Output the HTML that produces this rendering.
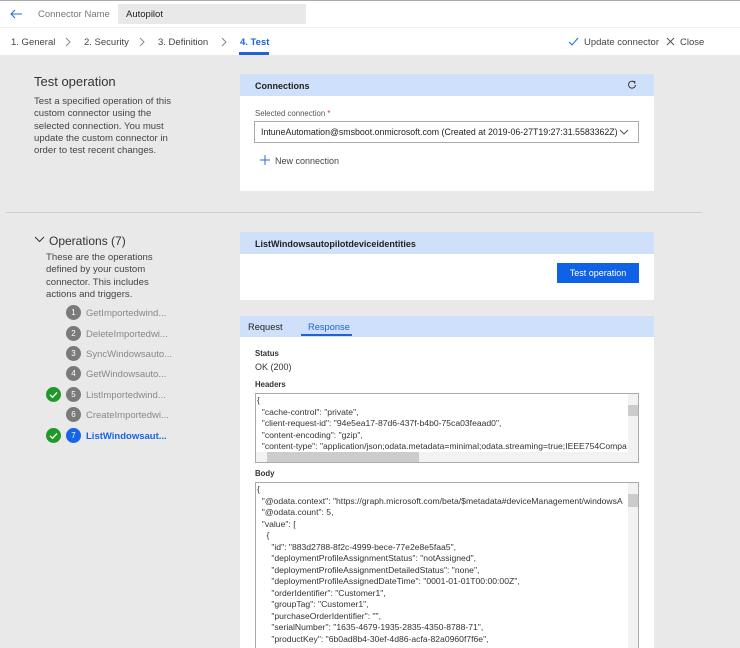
<!DOCTYPE html>
<html><head><meta charset="utf-8"><style>
*{box-sizing:border-box;margin:0;padding:0}
html,body{width:740px;height:648px;overflow:hidden}
body{background:#e9e9e9;font-family:"Liberation Sans",sans-serif;font-size:9px;color:#333;position:relative}
.abs{position:absolute}
.top{left:0;top:0;width:740px;height:55px;background:#fff;border-top:1px solid #aaa}
.hdr{background:#cfe0fa;color:#222;font-weight:bold;font-size:9px}
.white{background:#fff}
.mono{font-family:"Liberation Sans",sans-serif;font-size:8.6px;line-height:11.5px;white-space:pre;color:#333}
.circ{width:15px;height:15px;border-radius:50%;background:#7a7a7a;color:#fff;font-size:8px;text-align:center;line-height:15px;position:absolute}
.chk{width:15px;height:15px;border-radius:50%;background:#1f9a2a;position:absolute}
.op{position:absolute;left:86px;color:#888;font-size:9.5px}
.chev{position:absolute;top:36px}
</style></head><body>
<div class="abs top">
 <svg class="abs" style="left:9px;top:8px" width="14" height="10"><path d="M13 5H2M6 1L2 5l4 4" stroke="#2a6fd6" stroke-width="1.1" fill="none"/></svg>
 <div class="abs" style="left:38px;top:8px;color:#777;font-size:9.5px">Connector Name</div>
 <div class="abs" style="left:118px;top:3px;width:188px;height:20px;background:#e9e9e9;padding:5px 8px;font-size:9.5px;color:#222">Autopilot</div>
 <div class="abs" style="left:0;top:26px;width:740px;height:1px;background:#f0f0f0"></div>
 <div class="abs" style="left:11px;top:36px;font-size:9.5px;color:#444">1. General</div>
 <svg class="chev" style="left:65px" width="6" height="10"><path d="M1 1l4 4-4 4" stroke="#888" fill="none"/></svg>
 <div class="abs" style="left:84px;top:36px;font-size:9.5px;color:#444">2. Security</div>
 <svg class="chev" style="left:139px" width="6" height="10"><path d="M1 1l4 4-4 4" stroke="#888" fill="none"/></svg>
 <div class="abs" style="left:158px;top:36px;font-size:9.5px;color:#444">3. Definition</div>
 <svg class="chev" style="left:221px" width="6" height="10"><path d="M1 1l4 4-4 4" stroke="#888" fill="none"/></svg>
 <div class="abs" style="left:240px;top:36px;font-size:9.5px;color:#1f63d6;font-weight:bold">4. Test</div>
 <div class="abs" style="left:239px;top:51px;width:30px;height:3px;background:#1f63d6"></div>
 <svg class="abs" style="left:568px;top:36px" width="11" height="9"><path d="M1 5l3 3 6-7" stroke="#2a6fd6" stroke-width="1.1" fill="none"/></svg>
 <div class="abs" style="left:584px;top:36px;font-size:9.5px;color:#444">Update connector</div>
 <svg class="abs" style="left:666px;top:36px" width="9" height="9"><path d="M1 1l7 7M8 1L1 8" stroke="#555" stroke-width="1" fill="none"/></svg>
 <div class="abs" style="left:680px;top:36px;font-size:9.5px;color:#444">Close</div>
</div>
<div class="abs" style="left:34px;top:74px;font-size:13px;color:#333">Test operation</div>
<div class="abs" style="left:34px;top:96px;font-size:9.6px;line-height:12.3px;color:#444;width:148px">Test a specified operation of this custom connector using the selected connection. You must update the custom connector in order to test recent changes.</div>

<div class="abs hdr" style="left:240px;top:74px;width:414px;height:22px;padding:7px 15px">Connections<svg style="position:absolute;right:17px;top:6px" width="10" height="10"><path d="M7.5 2.2A3.5 3.5 0 1 0 8.5 5" stroke="#333" fill="none"/><path d="M5.5 1.5h2.3v2.3" stroke="#333" fill="none"/></svg></div>
<div class="abs white" style="left:240px;top:96px;width:414px;height:95px">
 <div class="abs" style="left:15px;top:13px;font-size:7.8px;color:#555">Selected connection <span style="color:#c33">*</span></div>
 <div class="abs" style="left:14px;top:25px;width:385px;height:22px;border:1px solid #aaa;padding:5px 6px;font-size:8.8px;color:#222;white-space:nowrap">IntuneAutomation@smsboot.onmicrosoft.com (Created at 2019-06-27T19:27:31.5583362Z)<svg style="position:absolute;right:9px;top:7px" width="10" height="6"><path d="M1 1l4 4 4-4" stroke="#555" fill="none"/></svg></div>
 <svg class="abs" style="left:20px;top:59px" width="10" height="10"><path d="M5 0v10M0 5h10" stroke="#2a6fd6" stroke-width="1"/></svg>
 <div class="abs" style="left:35px;top:60px;font-size:9px;color:#444">New connection</div>
</div>
<div class="abs" style="left:6px;top:212px;width:696px;height:1px;background:#cfcfcf"></div>

<svg class="abs" style="left:34px;top:236px" width="11" height="7"><path d="M1 1l4.5 4.5L10 1" stroke="#333" fill="none"/></svg>
<div class="abs" style="left:49px;top:234px;font-size:12px;color:#333">Operations (7)</div>
<div class="abs" style="left:46px;top:252px;font-size:9.6px;line-height:12.3px;color:#444;width:134px">These are the operations defined by your custom connector. This includes actions and triggers.</div>
<div class="circ" style="left:66px;top:305px">1</div><div class="op" style="top:308px">GetImportedwind...</div>
<div class="circ" style="left:66px;top:326px">2</div><div class="op" style="top:329px">DeleteImportedwi...</div>
<div class="circ" style="left:66px;top:346px">3</div><div class="op" style="top:349px">SyncWindowsauto...</div>
<div class="circ" style="left:66px;top:366px">4</div><div class="op" style="top:369px">GetWindowsauto...</div>
<div class="chk" style="left:46px;top:387px"><svg width="15" height="15"><path d="M4 7.8l2.5 2.5 4.5-4.8" stroke="#fff" stroke-width="1.3" fill="none"/></svg></div>
<div class="circ" style="left:66px;top:387px">5</div><div class="op" style="top:390px">ListImportedwind...</div>
<div class="circ" style="left:66px;top:407px">6</div><div class="op" style="top:410px">CreateImportedwi...</div>
<div class="chk" style="left:46px;top:428px"><svg width="15" height="15"><path d="M4 7.8l2.5 2.5 4.5-4.8" stroke="#fff" stroke-width="1.3" fill="none"/></svg></div>
<div class="circ" style="left:66px;top:428px;background:#1664e8">7</div><div class="op" style="top:431px;color:#1664e8;font-weight:bold">ListWindowsaut...</div>

<div class="abs hdr" style="left:240px;top:232px;width:414px;height:22px;padding:7px 15px">ListWindowsautopilotdeviceidentities</div>
<div class="abs white" style="left:240px;top:254px;width:414px;height:46px">
 <div class="abs" style="left:317px;top:9px;width:82px;height:20px;background:#0f62e6;color:#fff;font-size:9px;text-align:center;line-height:20px">Test operation</div>
</div>

<div class="abs hdr" style="left:240px;top:316px;width:414px;height:21px;font-weight:normal;font-size:9.3px">
 <span class="abs" style="left:8px;top:6px;color:#222">Request</span>
 <span class="abs" style="left:68px;top:6px;color:#1f63d6">Response</span>
 <span class="abs" style="left:61px;top:18px;width:51px;height:2px;background:#1f63d6"></span>
</div>
<div class="abs white" style="left:240px;top:337px;width:414px;height:311px">
 <div class="abs" style="left:15px;top:12px;font-size:7.8px;font-weight:bold;color:#333">Status</div>
 <div class="abs" style="left:15px;top:25px;font-size:9px;color:#333">OK (200)</div>
 <div class="abs" style="left:15px;top:43px;font-size:7.8px;font-weight:bold;color:#333">Headers</div>
 <div class="abs" style="left:15px;top:56px;width:384px;height:70px;border:1px solid #aaa;overflow:hidden">
  <div class="mono" style="position:absolute;left:1px;top:1px">{
  "cache-control": "private",
  "client-request-id": "94e5ea17-87d6-437f-b4b0-75ca03feaad0",
  "content-encoding": "gzip",
  "content-type": "application/json;odata.metadata=minimal;odata.streaming=true;IEEE754Compa</div>
  <div class="abs" style="right:0;top:0;width:10px;height:58px;background:#f2f2f2"><div style="margin-top:11px;height:11px;background:#ccc"></div></div>
  <div class="abs" style="left:0;bottom:0;width:383px;height:10px;background:#f2f2f2"><div style="margin-left:11px;width:152px;height:10px;background:#ccc"></div></div>
 </div>
 <div class="abs" style="left:15px;top:132px;font-size:7.8px;font-weight:bold;color:#333">Body</div>
 <div class="abs" style="left:15px;top:145px;width:384px;height:170px;border:1px solid #aaa;overflow:hidden">
  <div class="mono" style="position:absolute;left:1px;top:1px">{
  "@odata.context": "https://graph.microsoft.com/beta/$metadata#deviceManagement/windowsA
  "@odata.count": 5,
  "value": [
    {
      "id": "883d2788-8f2c-4999-bece-77e2e8e5faa5",
      "deploymentProfileAssignmentStatus": "notAssigned",
      "deploymentProfileAssignmentDetailedStatus": "none",
      "deploymentProfileAssignedDateTime": "0001-01-01T00:00:00Z",
      "orderIdentifier": "Customer1",
      "groupTag": "Customer1",
      "purchaseOrderIdentifier": "",
      "serialNumber": "1635-4679-1935-2835-4350-8788-71",
      "productKey": "6b0ad8b4-30ef-4d86-acfa-82a0960f7f6e",</div>
  <div class="abs" style="right:0;top:0;width:10px;height:170px;background:#f2f2f2"><div style="margin-top:11px;height:13px;background:#ccc"></div></div>
 </div>
</div>
</body></html>
